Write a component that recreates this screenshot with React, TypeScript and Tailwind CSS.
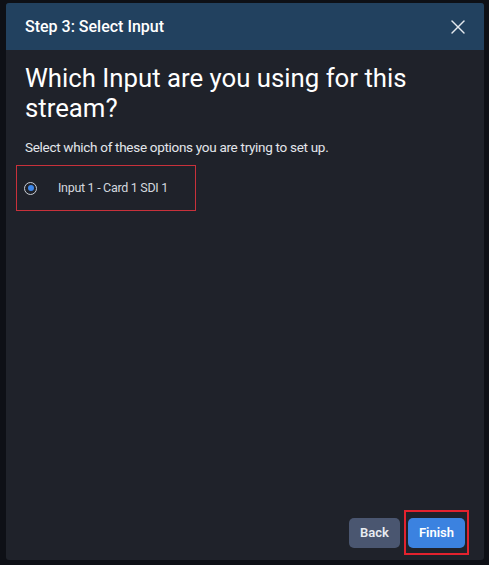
import { X } from "lucide-react";

const font = { fontFamily: "Roboto, 'Noto Sans', sans-serif" };

const InputOption = ({ label }: { label: string }) => {
  return (
    <label className="flex h-[46px] w-[180px] items-center border border-[#c8313b] pl-[7px]">
      <span className="flex h-[13px] w-[13px] items-center justify-center rounded-full border-[1.5px] border-[#c9ced6]">
        <span className="h-[6px] w-[6px] rounded-full bg-[#3d87ea]" />
      </span>
      <span className="ml-[21px] text-[12.5px] tracking-[-0.3px] text-[#d3d7de]">{label}</span>
    </label>
  );
};

const App = () => {
  return (
    <div className="h-[565px] w-[489px] bg-[#0e1016] pt-[3px] pl-[6px]" style={font}>
      <div className="flex h-[557px] w-[478px] flex-col overflow-hidden rounded-[3px] bg-[#1f222a]">
        <div className="flex h-[47px] items-center justify-between bg-[#22415f] pl-[19px] pr-[14px]">
          <h2 className="text-[16px] font-medium text-white">Step 3: Select Input</h2>
          <button className="text-[#e4e9ef]">
            <X size={24} strokeWidth={1.4} />
          </button>
        </div>

        <div className="flex flex-1 flex-col px-[10px] pb-[12px]">
          <div className="px-[9px]">
            <h1 className="mt-[13px] text-[25.75px] leading-[30px] text-white">
              Which Input are you using for this stream?
            </h1>
            <p className="mt-[14px] text-[13.5px] leading-[20px] tracking-[-0.3px] text-[#e3e6eb]">
              Select which of these options you are trying to set up.
            </p>
          </div>

          <div className="mt-[8px]">
            <InputOption label="Input 1 - Card 1 SDI 1" />
          </div>

          <div className="mt-auto flex items-center justify-end gap-[8px] pr-[9px]">
            <button className="h-[30px] w-[51px] rounded-[5px] bg-[#4a5670] text-[13px] font-semibold text-[#e8ebf0]">
              Back
            </button>
            <div className="relative">
              <button className="h-[30px] w-[57px] rounded-[5px] bg-[#3b82e0] text-[13px] font-semibold text-white">
                Finish
              </button>
              {/* highlight outline drawn over the button */}
              <div className="pointer-events-none absolute -top-[8px] -right-[4px] -bottom-[7px] -left-[4px] border-2 border-[#e3222e]" />
            </div>
          </div>
        </div>
      </div>
    </div>
  );
};

export default App;
